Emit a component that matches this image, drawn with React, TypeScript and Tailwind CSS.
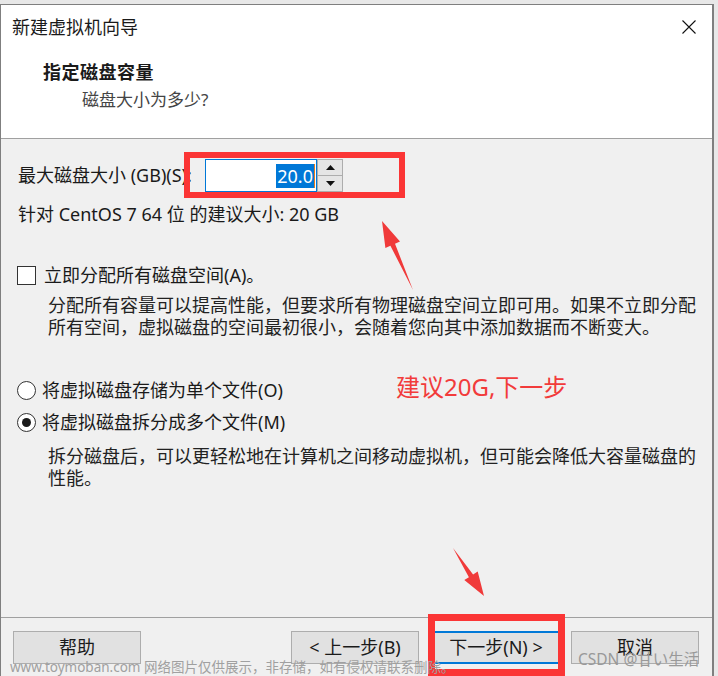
function Checkbox() {
  return <span className="block w-[19px] h-[19px] border border-[#333333] bg-white" />;
}

function Radio({ checked }: { checked?: boolean }) {
  return (
    <span className="flex w-[19px] h-[19px] items-center justify-center rounded-full border border-[#333333] bg-white">
      {checked && <span className="block w-[9px] h-[9px] rounded-full bg-[#1a1a1a]" />}
    </span>
  );
}

function Button({ label, primary }: { label: string; primary?: boolean }) {
  return (
    <div
      className={
        primary
          ? "flex w-[128px] h-[33px] items-center justify-center bg-[#e1e1e1] border-2 border-[#0078d7] text-[18px]"
          : "flex w-[128px] h-[33px] items-center justify-center bg-[#e1e1e1] border border-[#adadad] text-[18px]"
      }
    >
      {label}
    </div>
  );
}

export default function App() {
  return (
    <div className="relative w-[718px] h-[676px] overflow-hidden bg-[#e8e8e8] pt-[4px] text-[#1a1a1a] font-['Noto_Sans','Noto_Sans_CJK_SC',sans-serif]">
      <div className="flex flex-col w-[714px] h-[672px] border-l border-t border-r-2 border-[#7f7f7f] bg-[#f0f0f0]">
        {/* header */}
        <div className="h-[134px] bg-white border-b border-[#a0a0a0]">
          <div className="flex h-[44px] items-center justify-between pl-[11px] pr-[16px]">
            <span className="text-[18px]">新建虚拟机向导</span>
            <svg width="14" height="14" viewBox="0 0 14 14">
              <path d="M0.5 0.5 L13.5 13.5 M13.5 0.5 L0.5 13.5" stroke="#111" strokeWidth="1.1" fill="none" />
            </svg>
          </div>
          <div className="mt-[10px] h-[26px] leading-[26px] pl-[42px] text-[18px] font-bold tracking-[0.5px]">指定磁盘容量</div>
          <div className="mt-[2px] h-[26px] leading-[26px] pl-[81px] text-[17px] text-[#444444]">磁盘大小为多少?</div>
        </div>

        {/* content */}
        <div className="h-[478px] text-[18px]">
          <div className="mt-[20px] flex h-[33px] items-center pl-[17px]">
            <div className="w-[187px] whitespace-nowrap">最大磁盘大小 (GB)(S):</div>
            <div className="flex w-[112px] h-[33px] items-center justify-end bg-white border border-[#0078d7] pr-[1px]">
              <span className="bg-[#0078d7] px-[1px] leading-[24px] text-white">20.0</span>
              <span className="block w-[1px] h-[24px] bg-[#e07b20]" />
            </div>
            <div className="flex flex-col w-[26px] h-[33px]">
              <div className="flex flex-1 items-center justify-center bg-[#e5e5e5] border border-[#adadad]">
                <svg width="9" height="5" viewBox="0 0 9 5">
                  <path d="M0 5 L4.5 0 L9 5 Z" fill="#111" />
                </svg>
              </div>
              <div className="flex flex-1 items-center justify-center bg-[#e5e5e5] border border-t-0 border-[#adadad]">
                <svg width="9" height="5" viewBox="0 0 9 5">
                  <path d="M0 0 L4.5 5 L9 0 Z" fill="#111" />
                </svg>
              </div>
            </div>
          </div>

          <div className="mt-[10px] h-[24px] leading-[24px] pl-[17px]">针对 CentOS 7 64 位 的建议大小: 20 GB</div>

          <div className="mt-[37px] flex h-[24px] items-center pl-[16px]">
            <Checkbox />
            <span className="ml-[8px]">立即分配所有磁盘空间(A)。</span>
          </div>
          <div className="mt-[7px] pl-[47px] leading-[22px] whitespace-nowrap text-[#222222]">
            <div>分配所有容量可以提高性能，但要求所有物理磁盘空间立即可用。如果不立即分配</div>
            <div>所有空间，虚拟磁盘的空间最初很小，会随着您向其中添加数据而不断变大。</div>
          </div>

          <div className="mt-[40px] flex h-[24px] items-center pl-[16px]">
            <Radio />
            <span className="ml-[6px]">将虚拟磁盘存储为单个文件(O)</span>
          </div>
          <div className="mt-[8px] flex h-[24px] items-center pl-[16px]">
            <Radio checked />
            <span className="ml-[6px]">将虚拟磁盘拆分成多个文件(M)</span>
          </div>
          <div className="mt-[11px] pl-[47px] leading-[22px] whitespace-nowrap text-[#222222]">
            <div>拆分磁盘后，可以更轻松地在计算机之间移动虚拟机，但可能会降低大容量磁盘的</div>
            <div>性能。</div>
          </div>
        </div>

        {/* footer */}
        <div className="flex-1 border-t border-[#a0a0a0] pt-[13px]">
          <div className="flex">
            <div className="ml-[12px]"><Button label="帮助" /></div>
            <div className="ml-[150px]"><Button label="< 上一步(B)" /></div>
            <div className="ml-[13px]"><Button label="下一步(N) >" primary /></div>
            <div className="ml-[11px]"><Button label="取消" /></div>
          </div>
        </div>
      </div>

      {/* annotations */}
      <div className="absolute left-[184px] top-[152px] w-[221px] h-[46px] border-[6px] border-[#fb3535]" />
      <div className="absolute left-[428px] top-[614px] w-[137px] h-[62px] border-[7px] border-[#fb3535]" />
      <svg className="absolute left-0 top-0" width="718" height="676" viewBox="0 0 718 676">
        <polygon points="413,290 395,243.7 400,241.4 382,221 385.4,248 390.4,245.7" fill="#f03a3a" />
        <polygon points="453,548 473.1,574.4 477.7,571.5 484,596 464.3,580.1 468.9,577.2" fill="#f03a3a" />
      </svg>
      <div className="absolute left-[396px] top-[371px] text-[24px] leading-[32px] text-[#f23b3b]">建议20G,下一步</div>
      <div className="absolute left-[10px] top-[659px] text-[13.5px] leading-[17px] text-[#a0a0a0] whitespace-nowrap">
        www.toymoban.com 网络图片仅供展示，非存储，如有侵权请联系删除。
      </div>
      <div className="absolute left-[578px] top-[649px] text-[15.5px] leading-[20px] text-[#999999] whitespace-nowrap">CSDN @甘い生活</div>
    </div>
  );
}
